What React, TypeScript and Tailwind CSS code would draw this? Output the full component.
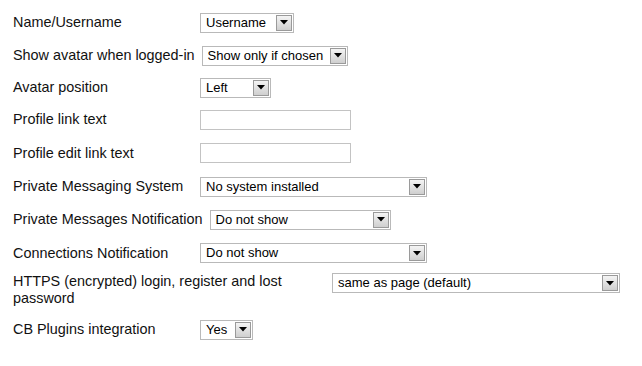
import React from "react";

type Field =
  | { kind: "select"; value: string; width: string }
  | { kind: "input"; width: string };

interface Row {
  label: string;
  field: Field;
  rowClass: string;
}

const rows: Row[] = [
  { label: "Name/Username", field: { kind: "select", value: "Username", width: "w-[94px]" }, rowClass: "h-[33px]" },
  { label: "Show avatar when logged-in", field: { kind: "select", value: "Show only if chosen", width: "w-[146px]" }, rowClass: "h-[33px]" },
  { label: "Avatar position", field: { kind: "select", value: "Left", width: "w-[71px]" }, rowClass: "h-[31px]" },
  { label: "Profile link text", field: { kind: "input", width: "w-[151px]" }, rowClass: "h-[33px]" },
  { label: "Profile edit link text", field: { kind: "input", width: "w-[151px]" }, rowClass: "h-[34px]" },
  { label: "Private Messaging System", field: { kind: "select", value: "No system installed", width: "w-[227px]" }, rowClass: "h-[33px]" },
  { label: "Private Messages Notification", field: { kind: "select", value: "Do not show", width: "w-[181px]" }, rowClass: "h-[33px]" },
  { label: "Connections Notification", field: { kind: "select", value: "Do not show", width: "w-[227px]" }, rowClass: "h-[34px]" },
];

const Arrow = () => (
  <span className="flex h-full w-[16px] items-center justify-center border border-[#9a9a9a] bg-gradient-to-b from-[#f4f4f4] to-[#cfcfcf]">
    <svg width="8" height="5" viewBox="0 0 8 5">
      <path d="M0 0h8L4 4.5z" fill="#000" />
    </svg>
  </span>
);

const SelectBox = ({ value, width }: { value: string; width: string }) => (
  <div className={`flex h-[20px] shrink-0 items-stretch border border-[#b9b9b9] bg-white p-[1px] ${width}`}>
    <span className="flex-1 truncate pl-[4px] text-[13px] leading-[16px] text-black">{value}</span>
    <Arrow />
  </div>
);

const TextBox = ({ width }: { width: string }) => (
  <div className={`h-[20px] shrink-0 border border-[#c3c3c3] bg-white ${width}`} />
);

const App = () => {
  return (
    <div className="h-[366px] w-[642px] bg-white pt-[6px] pl-[13px] font-['Liberation_Sans',Arial,sans-serif] text-[14.4px] text-[#111]">
      {rows.map((row) => (
        <div key={row.label} className={`flex items-center ${row.rowClass}`}>
          <div className="min-w-[187px] shrink-0 pr-[7px] leading-[17px]">{row.label}</div>
          {row.field.kind === "select" ? (
            <SelectBox value={row.field.value} width={row.field.width} />
          ) : (
            <TextBox width={row.field.width} />
          )}
        </div>
      ))}

      <div className="mt-[3px] flex items-start">
        <div className="w-[319px] shrink-0 pr-[7px] leading-[17px]">
          HTTPS (encrypted) login, register and lost password
        </div>
        <SelectBox value="same as page (default)" width="w-[288px]" />
      </div>

      <div className="mt-[6px] flex h-[33px] items-center">
        <div className="min-w-[187px] shrink-0 pr-[7px] leading-[17px]">CB Plugins integration</div>
        <SelectBox value="Yes" width="w-[53px]" />
      </div>
    </div>
  );
};

export default App;
